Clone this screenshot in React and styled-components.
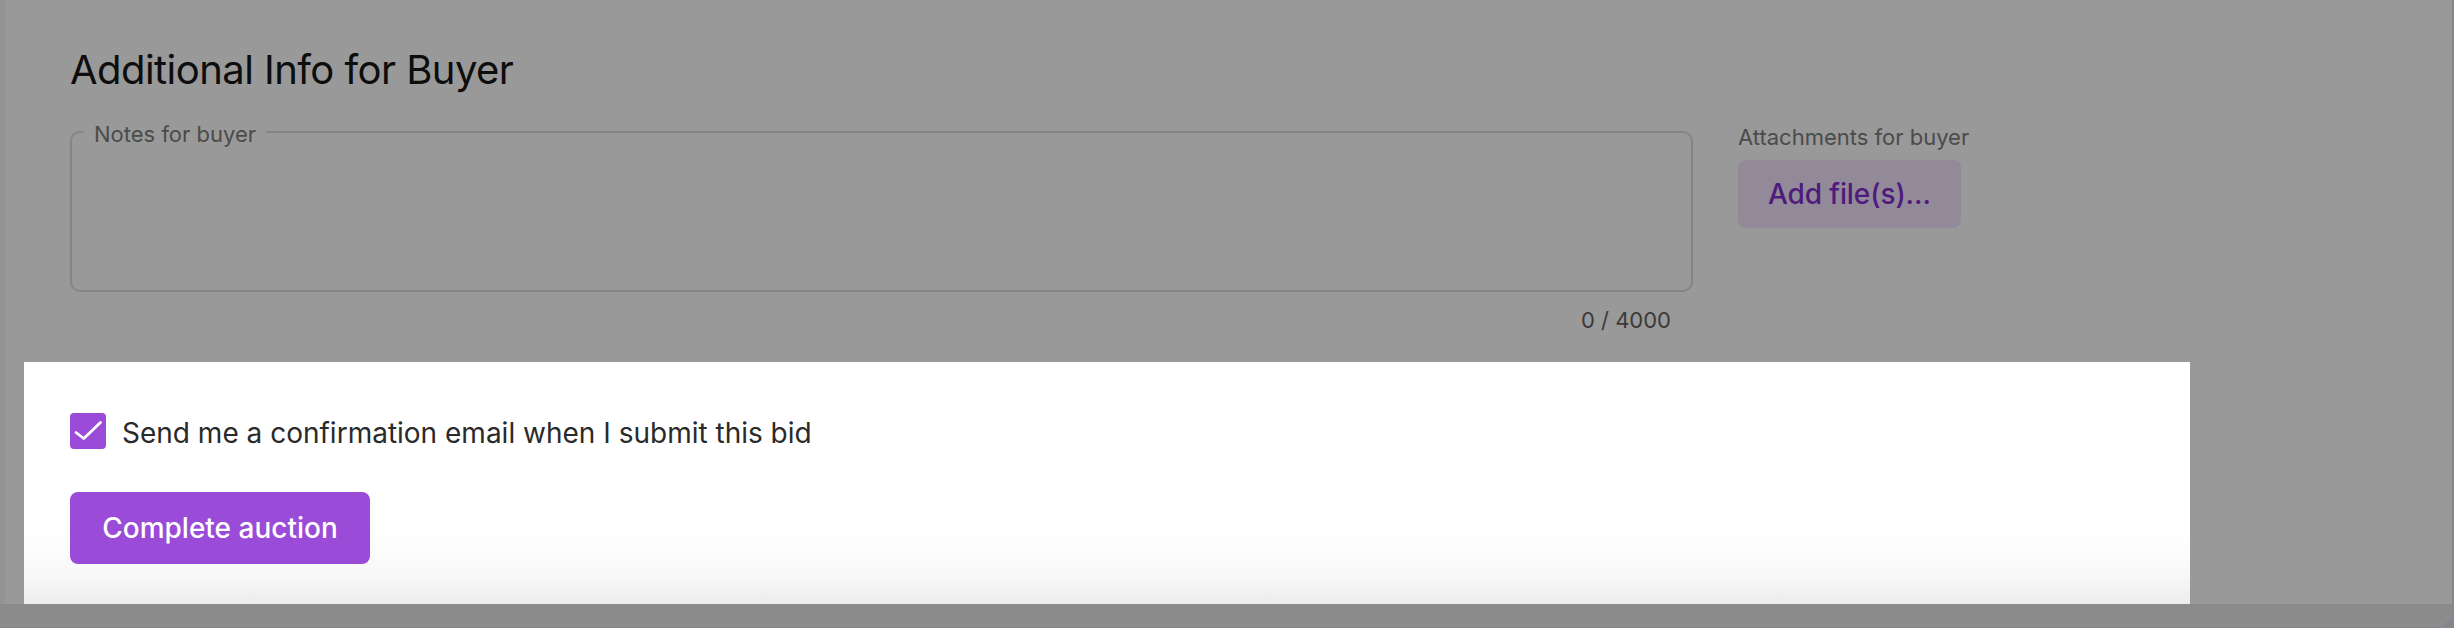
import styled, { createGlobalStyle } from "styled-components";

const GlobalStyle = createGlobalStyle`
  html, body {
    margin: 0;
    padding: 0;
    background: #84878d;
  }
  * {
    box-sizing: border-box;
  }
`;

const purple = "#9a4bd7";

const Screen = styled.div`
  width: 2454px;
  height: 628px;
  overflow: hidden;
  font-family: Inter, "Noto Sans", sans-serif;
`;

const Panel = styled.div`
  width: 2452px;
  height: 627px;
  display: flex;
  flex-direction: column;
  background: linear-gradient(to right, #949494 5px, #999999 5px);
  border-bottom-right-radius: 18px;
  overflow: hidden;
`;

const Section = styled.section`
  padding: 46px 0 0 70px;
  height: 362px;
`;

const Heading = styled.h2`
  margin: 0;
  font-size: 40px;
  line-height: 48px;
  font-weight: 400;
  color: #0d0d0d;
  letter-spacing: -0.55px;
`;

const FieldsRow = styled.div`
  display: flex;
  gap: 45px;
  margin-top: 24px;
`;

const NotesColumn = styled.div`
  width: 1623px;
  display: flex;
  flex-direction: column;
`;

const Outlined = styled.fieldset`
  margin: 0;
  padding: 0 12px;
  border: 2px solid #858585;
  border-radius: 10px;
  height: 174px;
`;

const Legend = styled.legend`
  padding: 4px 10px 0;
  font-size: 22px;
  line-height: 24px;
  color: #4b4b4b;
`;

const Counter = styled.div`
  align-self: flex-end;
  margin-top: 14px;
  padding-right: 22px;
  font-size: 22px;
  line-height: 28px;
  color: #3a3a3a;
`;

const AttachColumn = styled.div`
  display: flex;
  flex-direction: column;
  align-items: flex-start;
  gap: 9px;
  padding-top: 5px;
`;

const FieldLabel = styled.span`
  font-size: 22px;
  line-height: 28px;
  color: #4b4b4b;
`;

const SoftButton = styled.button`
  height: 68px;
  padding: 0 30px;
  border: none;
  border-radius: 8px;
  background: #928999;
  color: #4f1a7c;
  font-family: inherit;
  font-size: 28px;
  font-weight: 500;
  letter-spacing: -0.1px;
`;

const Footer = styled.div`
  margin-left: 24px;
  width: 2166px;
  height: 242px;
  padding: 50px 0 0 46px;
  display: flex;
  flex-direction: column;
  align-items: flex-start;
  gap: 42px;
  background: linear-gradient(
    to bottom,
    #ffffff 0%,
    #ffffff 70%,
    #f8f8f8 88%,
    #ececec 100%
  );
`;

const CheckRow = styled.label`
  display: flex;
  align-items: center;
  gap: 16px;
  font-size: 28px;
  color: #2a2a2a;
`;

const CheckText = styled.span`
  padding-top: 4px;
`;

const Box = styled.span`
  width: 36px;
  height: 36px;
  border-radius: 4px;
  background: ${(p) => p.$color};
  display: flex;
`;

const PrimaryButton = styled.button`
  width: 300px;
  height: 72px;
  border: none;
  border-radius: 8px;
  background: ${purple};
  color: #ffffff;
  font-family: inherit;
  font-size: 28px;
  font-weight: 500;
`;

const BottomBand = styled.div`
  flex: 1;
  background: linear-gradient(to bottom, #8a8a8a, #8d8d8d);
`;

const Checkbox = ({ checked }) => (
  <Box $color={checked ? purple : "#ffffff"}>
    {checked && (
      <svg width="36" height="36" viewBox="0 0 36 36" fill="none">
        <polyline
          points="6,19.5 13.8,25.5 30.5,9.5"
          stroke="#ffffff"
          strokeWidth="2.8"
          strokeLinecap="round"
          strokeLinejoin="round"
        />
      </svg>
    )}
  </Box>
);

export default function App() {
  return (
    <Screen>
      <GlobalStyle />
      <Panel>
        <Section>
          <Heading>Additional Info for Buyer</Heading>
          <FieldsRow>
            <NotesColumn>
              <Outlined>
                <Legend>Notes for buyer</Legend>
              </Outlined>
              <Counter>0 / 4000</Counter>
            </NotesColumn>
            <AttachColumn>
              <FieldLabel>Attachments for buyer</FieldLabel>
              <SoftButton type="button">Add file(s)...</SoftButton>
            </AttachColumn>
          </FieldsRow>
        </Section>
        <Footer>
          <CheckRow>
            <Checkbox checked />
            <CheckText>Send me a confirmation email when I submit this bid</CheckText>
          </CheckRow>
          <PrimaryButton type="button">Complete auction</PrimaryButton>
        </Footer>
        <BottomBand />
      </Panel>
    </Screen>
  );
}
